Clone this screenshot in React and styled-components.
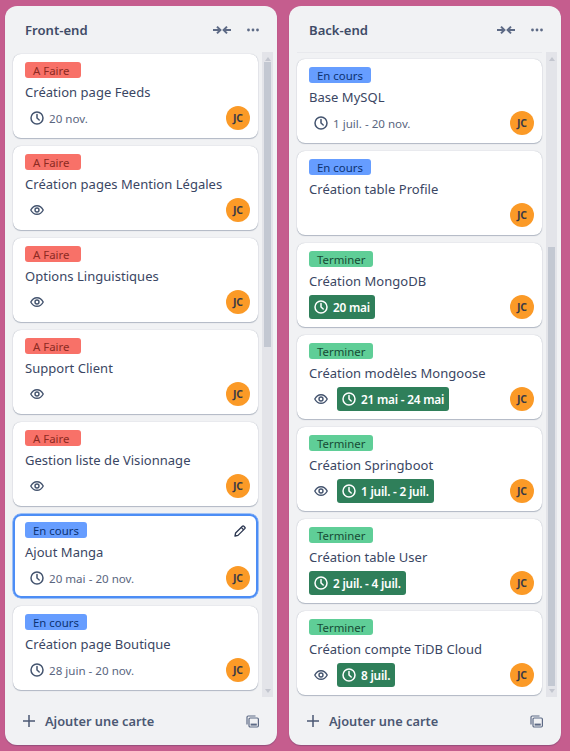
import React from "react";
import styled, { createGlobalStyle } from "styled-components";

const Global = createGlobalStyle`
  html, body { margin: 0; padding: 0; background: #c55d8e; }
  body { font-family: "Noto Sans", "Open Sans", sans-serif; color: #44546f; }
  * { box-sizing: border-box; }
`;

const Board = styled.div`
  display: flex;
  gap: 12px;
  padding: 6px 5px;
  width: 570px;
  height: 751px;
  overflow: hidden;
`;
const Column = styled.section`
  width: 272px;
  height: 739px;
  background: #f1f2f4;
  border-radius: 12px;
  display: flex;
  flex-direction: column;
  box-shadow: 0 1px 1px #091e4240;
`;
const Header = styled.header`
  height: 46px;
  flex: none;
  display: flex;
  align-items: center;
  padding: 2px 18px 0 20px;
`;
const Title = styled.h2`
  margin: 0;
  flex: 1;
  font-size: 13.1px;
  font-weight: 600;
  color: #3f4b67;
`;
const HeaderIcons = styled.div`
  display: flex;
  align-items: center;
  gap: 16px;
`;
const ListRow = styled.div`
  flex: 1;
  min-height: 0;
  display: flex;
  gap: 4px;
  padding-left: 8px;
`;
const Cards = styled.div`
  width: 245px;
  display: flex;
  flex-direction: column;
  gap: 8px;
  padding-top: ${(p) => p.$top}px;
  border-top: 1px solid ${(p) => (p.$line ? "#e8e9ed" : "transparent")};
`;
const Scrollbar = styled.div`
  width: 11px;
  background: #e3e4e9;
  position: relative;
  display: flex;
  flex-direction: column;
  align-items: center;
  justify-content: space-between;
  padding: 5px 0 4px;
`;
const Arrow = styled.span`
  width: 0;
  height: 0;
  border-left: 3.5px solid transparent;
  border-right: 3.5px solid transparent;
  ${(p) => (p.$down ? "border-top" : "border-bottom")}: 4px solid #c3c6cf;
`;
const Thumb = styled.div`
  position: absolute;
  left: 2px;
  width: 7px;
  background: #c3c8d2;
`;
const Card = styled.article`
  position: relative;
  height: 84px;
  flex: none;
  background: #fff;
  border-radius: 8px;
  padding: 8px 8px 8px 12px;
  box-shadow: ${(p) =>
    p.$active
      ? "0 0 0 2px #4c8df5 inset, 0 0 0 .5px #4c8df5"
      : "0 1px 1px #091e4240, 0 0 1px #091e424f"};
  display: flex;
  flex-direction: column;
`;
const colors = {
  todo: ["#f87168", "#8c2a22"],
  doing: ["#669dff", "#0c3272"],
  done: ["#5fce97", "#164b35"],
};
const Label = styled.span`
  align-self: flex-start;
  min-width: 56px;
  height: 16px;
  padding: 0 8px;
  border-radius: 3px;
  font-size: 11.4px;
  line-height: 17px;
  background: ${(p) => colors[p.$kind][0]};
  color: ${(p) => colors[p.$kind][1]};
`;
const CardTitle = styled.div`
  margin-top: 4px;
  font-size: 13px;
  letter-spacing: 0.03px;
  line-height: 20px;
  color: #3a4663;
  white-space: nowrap;
`;
const Footer = styled.div`
  margin-top: 4px;
  height: 24px;
  display: flex;
  align-items: center;
`;
const Badges = styled.div`
  flex: 1;
  display: flex;
  align-items: center;
  gap: 4px;
`;
const IconSlot = styled.span`
  width: 24px;
  height: 24px;
  display: flex;
  align-items: center;
  justify-content: center;
`;
const DateBadge = styled.span`
  height: 24px;
  display: flex;
  align-items: center;
  padding: 0 5px 0 5px;
  gap: 5px;
  border-radius: 3px;
  font-size: ${(p) => (p.$done ? 11.8 : 11.6)}px;
  white-space: nowrap;
  background: ${(p) => (p.$done ? "#2f7f5a" : "transparent")};
  color: ${(p) => (p.$done ? "#fff" : "#5a6680")};
  font-weight: ${(p) => (p.$done ? 600 : 400)};
  letter-spacing: ${(p) => (p.$done ? "-0.2px" : "0")};
`;
const Avatar = styled.span`
  width: 24px;
  height: 24px;
  flex: none;
  border-radius: 50%;
  background: #fb9a27;
  color: #3b3a45;
  font-size: 10.5px;
  font-weight: 700;
  display: flex;
  align-items: center;
  justify-content: center;
`;
const EditIcon = styled.span`
  position: absolute;
  right: 12px;
  top: 11px;
  display: flex;
`;
const ColumnFooter = styled.footer`
  height: 48px;
  flex: none;
  display: flex;
  align-items: center;
  padding: 0 18px;
`;
const AddText = styled.span`
  flex: 1;
  margin-left: 10px;
  font-size: 12.8px;
  font-weight: 600;
  color: #4b5873;
`;

const Clock = ({ c = "#44546f" }) => (
  <svg width="14" height="14" viewBox="0 0 14 14" fill="none" stroke={c} strokeWidth="1.5" strokeLinecap="round" strokeLinejoin="round" style={{ flex: "none" }}>
    <circle cx="7" cy="7" r="6" />
    <path d="M7 3.6V7l2.2 2" />
  </svg>
);
const Eye = () => (
  <svg width="14" height="12" viewBox="0 0 14 12" fill="none" stroke="#44546f" strokeWidth="1.4">
    <path d="M.8 6C2.2 3.2 4.4 1.7 7 1.7S11.8 3.2 13.2 6C11.8 8.8 9.6 10.3 7 10.3S2.2 8.8.8 6Z" />
    <circle cx="7" cy="6" r="2" />
  </svg>
);
const Collapse = () => (
  <svg width="18" height="10" viewBox="0 0 18 10" fill="none" stroke="#5d6a85" strokeWidth="2" strokeLinejoin="miter">
    <path d="M0 5h6M4 1.6 7.4 5 4 8.4" />
    <path d="M18 5h-6M14 1.6 10.6 5 14 8.4" />
  </svg>
);
const Dots = () => (
  <svg width="12" height="4" viewBox="0 0 12 4" fill="#5d6a85">
    <circle cx="1.5" cy="2" r="1.4" />
    <circle cx="6" cy="2" r="1.4" />
    <circle cx="10.5" cy="2" r="1.4" />
  </svg>
);
const Plus = () => (
  <svg width="12" height="12" viewBox="0 0 12 12" stroke="#4b5873" strokeWidth="1.5" fill="none">
    <path d="M6 0v12M0 6h12" />
  </svg>
);
const Template = () => (
  <svg width="13" height="13" viewBox="0 0 13 13" fill="none" stroke="#5d6a85" strokeWidth="1.2">
    <path d="M1 9.5V2.2C1 1.5 1.5 1 2.2 1h7.3" />
    <rect x="3" y="3" width="9.4" height="9" rx="1.2" />
    <rect x="4.6" y="8.6" width="6.2" height="2" fill="#5d6a85" stroke="none" />
  </svg>
);
const Pencil = () => (
  <svg width="12" height="12" viewBox="0 0 12 12" fill="none" stroke="#2b3650" strokeWidth="1.3" strokeLinejoin="round">
    <path d="M1 11l.6-3L8.4 1.2c.4-.4 1-.4 1.4 0l1 1c.4.4.4 1 0 1.4L4 10.4 1 11Z" />
    <path d="M7.2 2.4l2.4 2.4" />
  </svg>
);

const L = { todo: "A Faire", doing: "En cours", done: "Terminer" };

const front = [
  { k: "todo", t: "Création page Feeds", d: "20 nov." },
  { k: "todo", t: "Création pages Mention Légales", eye: true },
  { k: "todo", t: "Options Linguistiques", eye: true },
  { k: "todo", t: "Support Client", eye: true },
  { k: "todo", t: "Gestion liste de Visionnage", eye: true },
  { k: "doing", t: "Ajout Manga", d: "20 mai - 20 nov.", active: true },
  { k: "doing", t: "Création page Boutique", d: "28 juin - 20 nov." },
];
const back = [
  { k: "doing", t: "Base MySQL", d: "1 juil. - 20 nov." },
  { k: "doing", t: "Création table Profile" },
  { k: "done", t: "Création MongoDB", d: "20 mai", g: true },
  { k: "done", t: "Création modèles Mongoose", d: "21 mai - 24 mai", g: true, eye: true },
  { k: "done", t: "Création Springboot", d: "1 juil. - 2 juil.", g: true, eye: true },
  { k: "done", t: "Création table User", d: "2 juil. - 4 juil.", g: true },
  { k: "done", t: "Création compte TiDB Cloud", d: "8 juil.", g: true, eye: true },
];

const TaskCard = ({ c }) => (
  <Card $active={c.active}>
    <Label $kind={c.k}>{L[c.k]}</Label>
    <CardTitle>{c.t}</CardTitle>
    {c.active && (
      <EditIcon>
        <Pencil />
      </EditIcon>
    )}
    <Footer>
      <Badges>
        {c.eye && (
          <IconSlot>
            <Eye />
          </IconSlot>
        )}
        {c.d && (
          <DateBadge $done={c.g}>
            <Clock c={c.g ? "#fff" : "#44546f"} />
            {c.d}
          </DateBadge>
        )}
      </Badges>
      <Avatar>JC</Avatar>
    </Footer>
  </Card>
);

const Col = ({ title, items, top, line, thumbTop, thumbH }) => (
  <Column>
    <Header>
      <Title>{title}</Title>
      <HeaderIcons>
        <Collapse />
        <Dots />
      </HeaderIcons>
    </Header>
    <ListRow>
      <Cards $top={top} $line={line}>
        {items.map((c) => (
          <TaskCard key={c.t} c={c} />
        ))}
      </Cards>
      <Scrollbar>
        <Arrow />
        <Thumb style={{ top: thumbTop, height: thumbH }} />
        <Arrow $down />
      </Scrollbar>
    </ListRow>
    <ColumnFooter>
      <Plus />
      <AddText>Ajouter une carte</AddText>
      <Template />
    </ColumnFooter>
  </Column>
);

export default function App() {
  return (
    <>
      <Global />
      <Board>
        <Col title="Front-end" items={front} top={1} thumbTop={10} thumbH={285} />
        <Col title="Back-end" items={back} top={6} line thumbTop={195} thumbH={439} />
      </Board>
    </>
  );
}
